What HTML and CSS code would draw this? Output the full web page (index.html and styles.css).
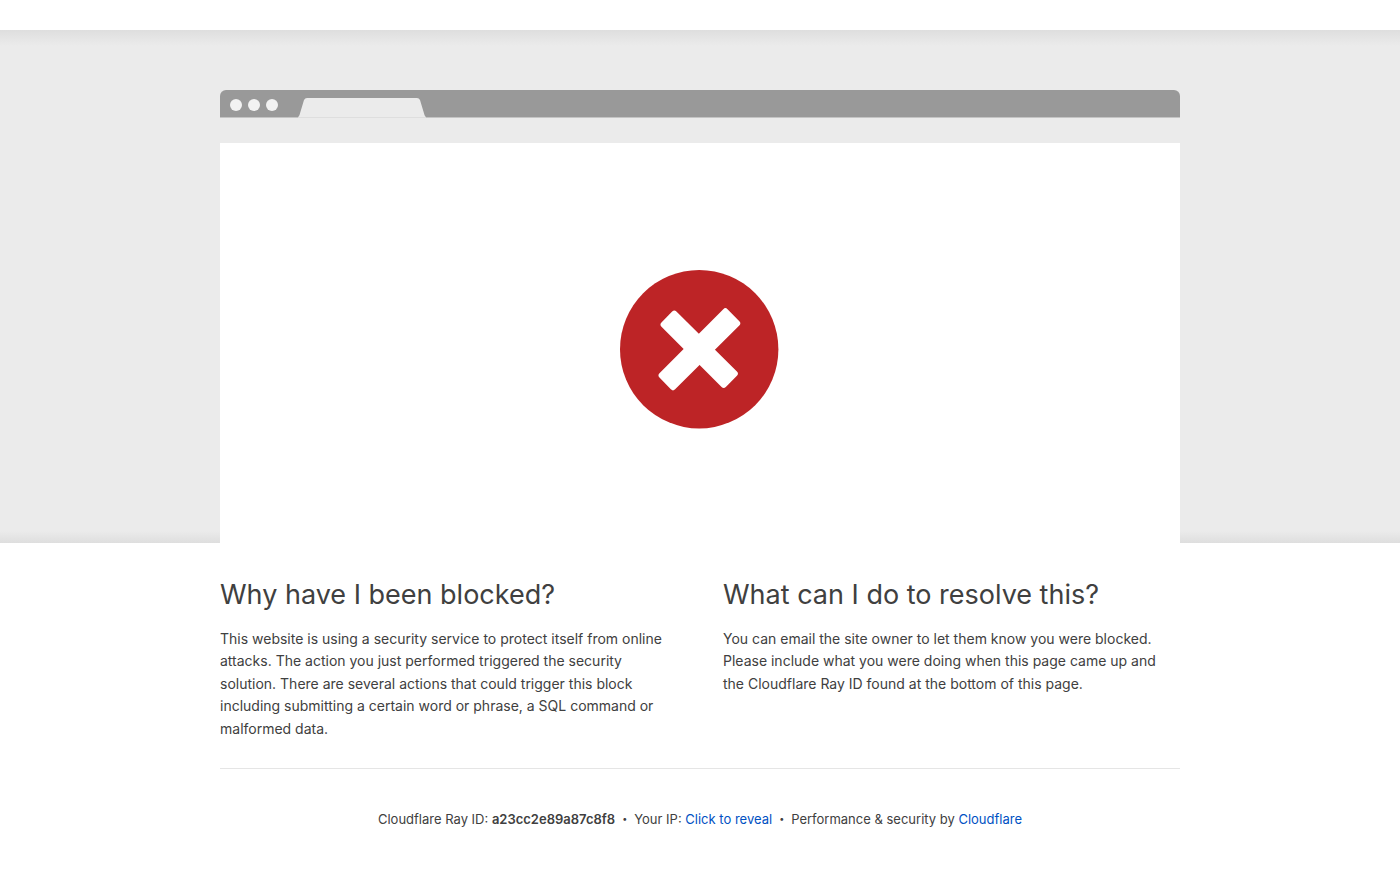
FILE: index.html
```
<!DOCTYPE html>
<html lang="en">
<head>
  <meta charset="UTF-8" />
  <meta name="viewport" content="width=device-width, initial-scale=1.0" />
  <title>Attention Required! | Cloudflare</title>
  <link rel="stylesheet" href="styles.css">
</head>
<body>
  <section class="highlight">
    <div class="wrapper">
      <div class="browser-bar">
        <span class="dot"></span>
        <span class="dot"></span>
        <span class="dot"></span>
        <svg class="tab" width="128" height="20" viewBox="0 0 128 20" aria-hidden="true">
          <path d="M0 19 Q1 18.500 1.500 17 L6 2 Q7 0 9 0 H119 Q121 0 122 2 L126.500 17 Q127 18.500 128 19 Z" fill="#ebebeb" />
          <path d="M0 19 H128 V20 H0 Z" fill="#dedede" />
        </svg>
      </div>
      <div class="screenshot">
        <svg class="error-icon" viewBox="0 0 160 160" role="img" aria-label="Blocked">
          <circle cx="79.200" cy="79.200" r="79.200" fill="#bd2426" />
          <g fill="#fff" stroke="#fff" stroke-width="6" stroke-linejoin="round">
            <path d="M54.300 43.600 L43.600 54.600 L103.700 114.800 L114.800 103.600 Z" />
            <path d="M105.400 41.300 L117.200 53.300 L53 117.200 L41.600 105.300 Z" />
          </g>
        </svg>
      </div>
    </div>
  </section>

  <main class="wrapper">
    <div class="columns">
      <div class="column">
        <h2>Why have I been blocked?</h2>
        <p>This website is using a security service to protect itself from online attacks. The action you just performed triggered the security solution. There are several actions that could trigger this block including submitting a certain word or phrase, a SQL command or malformed data.</p>
      </div>
      <div class="column">
        <h2>What can I do to resolve this?</h2>
        <p>You can email the site owner to let them know you were blocked. Please include what you were doing when this page came up and the Cloudflare Ray ID found at the bottom of this page.</p>
      </div>
    </div>

    <footer class="footer">
      <span>Cloudflare Ray ID: <strong>a23cc2e89a87c8f8</strong></span>
      <span class="separator">&bull;</span>
      <span>Your IP: <button type="button" class="reveal">Click to reveal</button></span>
      <span class="separator">&bull;</span>
      <span>Performance &amp; security by <a href="https://www.cloudflare.com/">Cloudflare</a></span>
    </footer>
  </main>
</body>
</html>
```
FILE: styles.css
```
* {
  box-sizing: border-box;
}

body {
  margin: 0;
  background-color: #fff;
  color: #404040;
  font-family: Inter, "Liberation Sans", sans-serif;
  font-size: 14px;
  line-height: 1.6;
}

.wrapper {
  width: 90%;
  max-width: 960px;
  margin: 0 auto;
}

.highlight {
  margin-top: 30px;
  padding-top: 60px;
  background-color: #ebebeb;
  background-image:
    linear-gradient(to bottom, #dedede, #ebebeb 16px, transparent 16px),
    linear-gradient(to top, #dedede, #ebebeb 12px);
}

.browser-bar {
  display: flex;
  align-items: center;
  gap: 6px;
  height: 28px;
  padding: 2px 10px 0;
  background-color: #999;
  border-bottom: 1px solid #c4c4c4;
  border-radius: 6px 6px 0 0;
}

.dot {
  width: 12px;
  height: 12px;
  border-radius: 50%;
  background-color: #f2f2f2;
}

/* the open tab covers the bar's bottom border */
.tab {
  align-self: flex-end;
  margin-bottom: -1px;
  margin-left: 14px;
}

.screenshot {
  display: flex;
  justify-content: center;
  margin-top: 25px;
  padding: 127px 0 113px;
  background-color: #fff;
}

.error-icon {
  width: 160px;
  height: 160px;
}

.columns {
  display: grid;
  grid-template-columns: 1fr 1fr;
  gap: 46px;
  padding: 32px 0 28px;
  border-bottom: 1px solid #e5e5e5;
}

h2 {
  margin: 0;
  font-size: 27px;
  font-weight: 400;
  line-height: 39px;
}

p {
  margin: 14px 0 0;
}

.footer {
  display: flex;
  flex-wrap: wrap;
  justify-content: center;
  padding: 40px 0;
  font-size: 13px;
  line-height: 20px;
}

.footer strong {
  font-weight: 600;
}

.separator {
  padding: 0 7px;
  font-size: 9px;
}

.reveal {
  padding: 0;
  border: 0;
  background: none;
  font: inherit;
  cursor: pointer;
}

a,
.reveal {
  color: #0051c3;
  text-decoration: none;
}

a:hover,
.reveal:hover {
  color: #ee730a;
  text-decoration: underline;
}
```
